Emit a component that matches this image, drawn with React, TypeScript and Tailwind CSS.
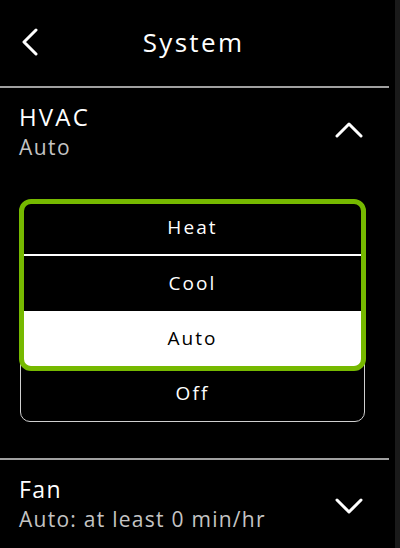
import React from 'react';

const font = { fontFamily: '"Open Sans", "Noto Sans", sans-serif' };

const Chevron = ({ dir, className }: { dir: 'left' | 'up' | 'down'; className?: string }) => {
  const pts =
    dir === 'left' ? '14,2 2,14 14,26' : dir === 'up' ? '2,14 14,2 26,14' : '2,2 14,14 26,2';
  const box = dir === 'left' ? '0 0 16 28' : '0 0 28 16';
  return (
    <svg viewBox={box} className={className} fill="none">
      <polyline points={pts} stroke="white" strokeWidth={3} strokeLinecap="round" strokeLinejoin="round" />
    </svg>
  );
};

const options = ['Heat', 'Cool', 'Auto', 'Off'];

export default function App() {
  const selected = 'Auto';
  return (
    <div className="w-[400px] h-[548px] bg-black flex overflow-hidden text-white" style={font}>
      <div className="w-[395px] flex flex-col">
        {/* header */}
        <div className="h-[86px] relative flex items-center justify-center">
          <Chevron dir="left" className="absolute left-[22px] top-[28px] w-[16px] h-[28px]" />
          <span className="text-[26px] tracking-[0.09em] -ml-[8px] -mt-[2px]">System</span>
        </div>
        <div className="h-[2px] bg-[#a0a0a0] mr-[6px]" />

        {/* HVAC */}
        <div className="flex items-center justify-between pl-[19px] pr-[32px] pt-[14px]">
          <div className="flex flex-col">
            <span className="text-[24px] leading-[30px] tracking-[0.09em]">HVAC</span>
            <span className="text-[21px] leading-[30px] text-[#c4c4c4] tracking-[0.07em]">Auto</span>
          </div>
          <Chevron dir="up" className="w-[28px] h-[16px] -mt-[4px]" />
        </div>

        {/* options */}
        <div className="relative mx-[20px] mt-[38px] w-[345px] border border-[#d0d0d0] rounded-[10px]">
          {options.map((o, i) => (
            <div
              key={o}
              className={`h-[55px] flex items-center justify-center text-[19px] tracking-[0.11em] ${
                o === selected ? 'bg-white text-black rounded-b-[8px]' : ''
              } ${i === 0 ? 'border-b-2 border-white' : ''}`}
            >
              {o}
            </div>
          ))}
          <div className="absolute -left-[2px] -right-[2px] -top-[2px] h-[172px] border-[5px] border-[#76b900] rounded-[12px]" />
        </div>

        <div className="h-[2px] bg-[#a0a0a0] mr-[6px] mt-[36px]" />

        {/* Fan */}
        <div className="flex items-center justify-between pl-[19px] pr-[32px] pt-[14px]">
          <div className="flex flex-col">
            <span className="text-[23px] leading-[30px] tracking-[0.06em]">Fan</span>
            <span className="text-[21px] leading-[30px] text-[#c4c4c4] tracking-[0.06em]">Auto: at least 0 min/hr</span>
          </div>
          <Chevron dir="down" className="w-[28px] h-[16px] mt-[4px]" />
        </div>
      </div>
      <div className="w-[5px] bg-[#1a1a1a]" />
    </div>
  );
}
